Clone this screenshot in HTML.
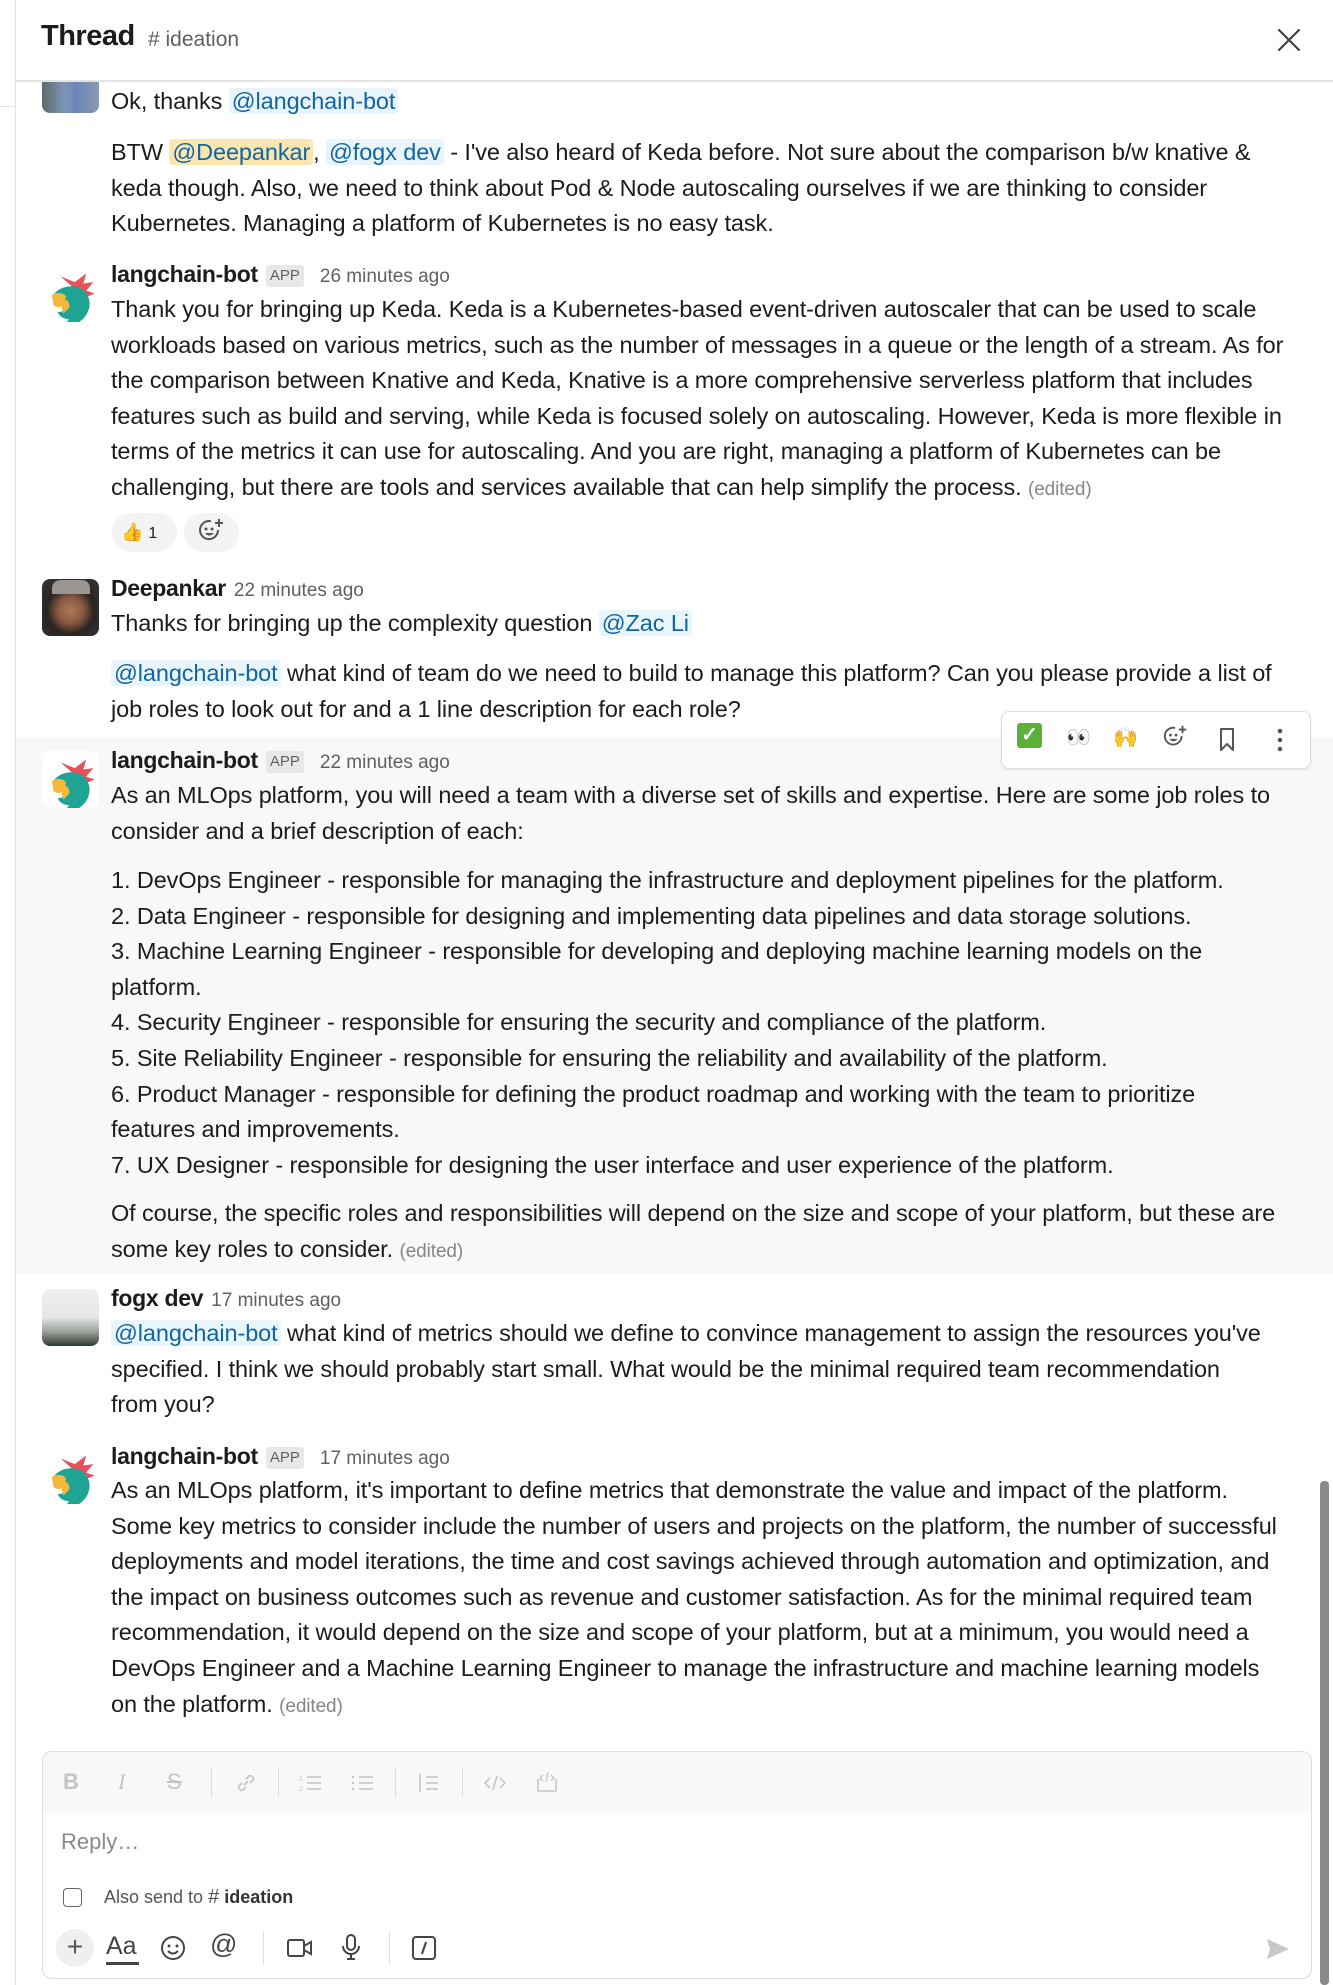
<!DOCTYPE html>
<html><head><meta charset="utf-8">
<style>
*{margin:0;padding:0;box-sizing:border-box}
body{width:1333px;height:1985px;background:#fff;font-family:"Liberation Sans",sans-serif;color:#1d1c1d;position:relative;overflow:hidden}
.abs{position:absolute}
.blk{position:absolute;left:111px;font-size:23.5px;line-height:35.6px;white-space:nowrap;letter-spacing:-0.1px}
.blk div{height:35.6px}
.m{background:#e8f5fa;color:#1264a3;border-radius:4px;padding:0 3px}
.my{background:#fbe6b0;color:#1264a3;border-radius:4px;padding:0 3px}
.ed{color:#868686;font-size:19px}
.hd{position:absolute;left:111px;font-size:23px;line-height:35.6px;white-space:nowrap}
.hd b{font-weight:bold;letter-spacing:-0.3px}
.app{display:inline-block;background:#e8e8e8;color:#616061;font-size:15px;line-height:22px;padding:0 4px;border-radius:3px;margin:0 8px 0 8px;vertical-align:2px}
.ts{color:#616061;font-size:19px;margin-left:8px}
.av{position:absolute;left:42px;width:57px;height:57px;border-radius:8px;overflow:hidden}
</style></head><body>
<div class="abs" style="left:15px;top:0;width:1px;height:1985px;background:#e2e2e2"></div>
<div class="abs" style="left:0;top:106px;width:15px;height:1px;background:#e2e2e2"></div>
<div class="abs" style="left:41px;top:20px;font-size:29px;font-weight:bold;letter-spacing:-0.5px">Thread</div>
<div class="abs" style="left:148px;top:28px;font-size:21px;color:#616061"># ideation</div>
<svg class="abs" style="left:1277px;top:28px" width="24" height="24" viewBox="0 0 24 24"><path d="M2 2L22 22M22 2L2 22" stroke="#444" stroke-width="2.2" stroke-linecap="round"/></svg>
<div class="abs" style="left:15px;top:80px;width:1318px;height:2px;background:#e4e4e4"></div>

<div class="abs" style="left:42px;top:82px;width:57px;height:31px;border-radius:0 0 8px 8px;background:linear-gradient(90deg,#5d6b6a 0%,#7d95b8 40%,#6a86b8 60%,#8a9ab0 100%)"></div>
<div class="blk" style="top:84px"><div>Ok, thanks <span class="m">@langchain-bot</span></div></div>
<div class="blk" style="top:135px">
<div>BTW <span class="my">@Deepankar</span>, <span class="m">@fogx dev</span> - I've also heard of Keda before. Not sure about the comparison b/w knative &amp;</div>
<div>keda though. Also, we need to think about Pod &amp; Node autoscaling ourselves if we are thinking to consider</div>
<div>Kubernetes. Managing a platform of Kubernetes is no easy task.</div>
</div>

<svg class="av" style="top:265px" viewBox="9 6 40 40"><rect x="0" y="0" width="57" height="57" fill="#fff"/><path d="M22 14l10 4 8-6-2 7 7-1-5 6 6 2-7 3z" fill="#e8505b"/><path d="M17 27c4-6 14-8 20-4 6 4 7 12 3 18-3 5-9 8-15 7l3-4c-4 0-7-2-8-5 4 0 6-2 6-4-4 0-8-3-9-8z" fill="#1fa392"/><path d="M16 27c3-2 8-2 10 1l-2 6c-2 2-5 2-7 0z" fill="#f2b83a"/><path d="M24 30c3 0 5 3 4 6l-4 4c-1-3-2-6 0-10z" fill="#f2b83a"/></svg>
<div class="hd" style="top:257px"><b>langchain-bot</b><span class="app">APP</span><span class="ts">26 minutes ago</span></div>
<div class="blk" style="top:292px">
<div>Thank you for bringing up Keda. Keda is a Kubernetes-based event-driven autoscaler that can be used to scale</div>
<div>workloads based on various metrics, such as the number of messages in a queue or the length of a stream. As for</div>
<div>the comparison between Knative and Keda, Knative is a more comprehensive serverless platform that includes</div>
<div>features such as build and serving, while Keda is focused solely on autoscaling. However, Keda is more flexible in</div>
<div>terms of the metrics it can use for autoscaling. And you are right, managing a platform of Kubernetes can be</div>
<div>challenging, but there are tools and services available that can help simplify the process. <span class="ed">(edited)</span></div>
</div>
<div class="abs" style="left:112px;top:513px;width:65px;height:39px;border-radius:20px;background:#f3f3f3;font-size:18px;line-height:39px;padding-left:9px">👍 <span style="font-size:16px">1</span></div>
<div class="abs" style="left:184px;top:513px;width:55px;height:39px;border-radius:20px;background:#f3f3f3"></div>
<svg class="abs" style="left:197px;top:516px" width="30" height="30" viewBox="0 0 30 30"><path d="M21 14a9 9 0 1 1-7-8.7" fill="none" stroke="#555" stroke-width="2"/><circle cx="9" cy="13" r="1.5" fill="#555"/><circle cx="15" cy="13" r="1.5" fill="#555"/><path d="M8 17q4 5 9 0z" fill="#555"/><path d="M22 3v8M18 7h8" stroke="#555" stroke-width="2"/></svg>

<div class="av" style="top:579px;background:radial-gradient(circle at 50% 55%,#b07a5a 0,#8a5a40 30%,#2a2522 55%,#3a3532 100%)"></div>
<div class="abs" style="left:52px;top:580px;width:38px;height:14px;border-radius:8px 8px 0 0;background:#9a9590"></div>
<div class="hd" style="top:571px"><b>Deepankar</b><span class="ts">22 minutes ago</span></div>
<div class="blk" style="top:606px"><div>Thanks for bringing up the complexity question <span class="m">@Zac Li</span></div></div>
<div class="blk" style="top:656px">
<div><span class="m">@langchain-bot</span> what kind of team do we need to build to manage this platform? Can you please provide a list of</div>
<div>job roles to look out for and a 1 line description for each role?</div>
</div>

<div class="abs" style="left:16px;top:737px;width:1317px;height:537px;background:#f8f8f8"></div>
<svg class="av" style="top:751px" viewBox="9 6 40 40"><rect x="0" y="0" width="57" height="57" fill="#fff"/><path d="M22 14l10 4 8-6-2 7 7-1-5 6 6 2-7 3z" fill="#e8505b"/><path d="M17 27c4-6 14-8 20-4 6 4 7 12 3 18-3 5-9 8-15 7l3-4c-4 0-7-2-8-5 4 0 6-2 6-4-4 0-8-3-9-8z" fill="#1fa392"/><path d="M16 27c3-2 8-2 10 1l-2 6c-2 2-5 2-7 0z" fill="#f2b83a"/><path d="M24 30c3 0 5 3 4 6l-4 4c-1-3-2-6 0-10z" fill="#f2b83a"/></svg>
<div class="hd" style="top:743px"><b>langchain-bot</b><span class="app">APP</span><span class="ts">22 minutes ago</span></div>
<div class="blk" style="top:778px">
<div>As an MLOps platform, you will need a team with a diverse set of skills and expertise. Here are some job roles to</div>
<div>consider and a brief description of each:</div>
</div>
<div class="blk" style="top:863px">
<div>1. DevOps Engineer - responsible for managing the infrastructure and deployment pipelines for the platform.</div>
<div>2. Data Engineer - responsible for designing and implementing data pipelines and data storage solutions.</div>
<div>3. Machine Learning Engineer - responsible for developing and deploying machine learning models on the</div>
<div>platform.</div>
<div>4. Security Engineer - responsible for ensuring the security and compliance of the platform.</div>
<div>5. Site Reliability Engineer - responsible for ensuring the reliability and availability of the platform.</div>
<div>6. Product Manager - responsible for defining the product roadmap and working with the team to prioritize</div>
<div>features and improvements.</div>
<div>7. UX Designer - responsible for designing the user interface and user experience of the platform.</div>
</div>
<div class="blk" style="top:1196px">
<div>Of course, the specific roles and responsibilities will depend on the size and scope of your platform, but these are</div>
<div>some key roles to consider. <span class="ed">(edited)</span></div>
</div>

<div class="abs" style="left:1001px;top:711px;width:310px;height:58px;background:#fff;border:1px solid #ddd;border-radius:8px;box-shadow:0 1px 3px rgba(0,0,0,.08)"></div>
<div class="abs" style="left:1017px;top:723px;width:25px;height:25px;background:#5bb03a;border-radius:3px;color:#fff;font-size:20px;line-height:25px;text-align:center;font-weight:bold">✓</div>
<div class="abs" style="left:1066px;top:725px;font-size:20px">👀</div>
<div class="abs" style="left:1113px;top:725px;font-size:20px">🙌</div>
<svg class="abs" style="left:1162px;top:723px" width="28" height="28" viewBox="0 0 30 30"><path d="M21 14a9 9 0 1 1-7-8.7" fill="none" stroke="#555" stroke-width="2"/><circle cx="9" cy="13" r="1.5" fill="#555"/><circle cx="15" cy="13" r="1.5" fill="#555"/><path d="M8 17q4 5 9 0z" fill="#555"/><path d="M22 3v8M18 7h8" stroke="#555" stroke-width="2"/></svg>
<svg class="abs" style="left:1218px;top:727px" width="18" height="26" viewBox="0 0 18 26"><path d="M3 2h12v21l-6-6-6 6z" fill="none" stroke="#555" stroke-width="2" stroke-linejoin="round"/></svg>
<svg class="abs" style="left:1277px;top:727px" width="6" height="26"><circle cx="3" cy="4" r="2.3" fill="#555"/><circle cx="3" cy="13" r="2.3" fill="#555"/><circle cx="3" cy="22" r="2.3" fill="#555"/></svg>

<div class="av" style="top:1289px;background:linear-gradient(180deg,#f0f0f0 0%,#e6e6e6 50%,#9aa09a 75%,#2f3a32 100%)"></div>
<div class="hd" style="top:1281px"><b>fogx dev</b><span class="ts">17 minutes ago</span></div>
<div class="blk" style="top:1316px">
<div><span class="m">@langchain-bot</span> what kind of metrics should we define to convince management to assign the resources you've</div>
<div>specified. I think we should probably start small. What would be the minimal required team recommendation</div>
<div>from you?</div>
</div>

<svg class="av" style="top:1447px" viewBox="9 6 40 40"><rect x="0" y="0" width="57" height="57" fill="#fff"/><path d="M22 14l10 4 8-6-2 7 7-1-5 6 6 2-7 3z" fill="#e8505b"/><path d="M17 27c4-6 14-8 20-4 6 4 7 12 3 18-3 5-9 8-15 7l3-4c-4 0-7-2-8-5 4 0 6-2 6-4-4 0-8-3-9-8z" fill="#1fa392"/><path d="M16 27c3-2 8-2 10 1l-2 6c-2 2-5 2-7 0z" fill="#f2b83a"/><path d="M24 30c3 0 5 3 4 6l-4 4c-1-3-2-6 0-10z" fill="#f2b83a"/></svg>
<div class="hd" style="top:1439px"><b>langchain-bot</b><span class="app">APP</span><span class="ts">17 minutes ago</span></div>
<div class="blk" style="top:1473px">
<div>As an MLOps platform, it's important to define metrics that demonstrate the value and impact of the platform.</div>
<div>Some key metrics to consider include the number of users and projects on the platform, the number of successful</div>
<div>deployments and model iterations, the time and cost savings achieved through automation and optimization, and</div>
<div>the impact on business outcomes such as revenue and customer satisfaction. As for the minimal required team</div>
<div>recommendation, it would depend on the size and scope of your platform, but at a minimum, you would need a</div>
<div>DevOps Engineer and a Machine Learning Engineer to manage the infrastructure and machine learning models</div>
<div>on the platform. <span class="ed">(edited)</span></div>
</div>

<div class="abs" style="left:1320px;top:1481px;width:9px;height:504px;background:#8a8a8a;border-radius:4px"></div>

<div class="abs" style="left:42px;top:1751px;width:1270px;height:228px;border:1px solid #dcdcdc;border-radius:10px;overflow:hidden">
 <div style="height:60px;background:#f8f8f8"></div>
</div>
<div class="abs" style="left:63px;top:1769px;font-size:22px;font-weight:bold;color:#c4c4c4">B</div>
<div class="abs" style="left:118px;top:1769px;font-size:22px;font-style:italic;font-family:'Liberation Serif',serif;color:#c4c4c4">I</div>
<div class="abs" style="left:167px;top:1769px;font-size:22px;color:#c4c4c4;text-decoration:line-through">S</div>
<div class="abs" style="left:211px;top:1767px;width:1px;height:30px;background:#ddd"></div>
<svg class="abs" style="left:233px;top:1770px" width="26" height="26"><path d="M11 15l4-4M9 13l-3 3a3 3 0 0 0 4 4l3-3M17 13l3-3a3 3 0 0 0-4-4l-3 3" fill="none" stroke="#c4c4c4" stroke-width="1.6"/></svg>
<div class="abs" style="left:278px;top:1767px;width:1px;height:30px;background:#ddd"></div>
<svg class="abs" style="left:298px;top:1772px" width="24" height="22"><path d="M9 5h14M9 11h14M9 17h14" stroke="#c4c4c4" stroke-width="1.5"/><text x="1" y="9" font-size="7" fill="#c4c4c4" font-family="Liberation Sans">1</text><text x="1" y="19" font-size="7" fill="#c4c4c4" font-family="Liberation Sans">2</text></svg>
<svg class="abs" style="left:350px;top:1772px" width="24" height="22"><path d="M9 5h14M9 11h14M9 17h14" stroke="#c4c4c4" stroke-width="1.5"/><circle cx="3" cy="5" r="1.2" fill="#c4c4c4"/><circle cx="3" cy="11" r="1.2" fill="#c4c4c4"/><circle cx="3" cy="17" r="1.2" fill="#c4c4c4"/></svg>
<div class="abs" style="left:395px;top:1767px;width:1px;height:30px;background:#ddd"></div>
<svg class="abs" style="left:417px;top:1772px" width="24" height="22"><path d="M3 2v18M9 5h12M9 11h12M9 17h12" stroke="#c4c4c4" stroke-width="1.5"/></svg>
<div class="abs" style="left:462px;top:1767px;width:1px;height:30px;background:#ddd"></div>
<svg class="abs" style="left:482px;top:1772px" width="26" height="22"><path d="M8 6l-5 5 5 5M18 6l5 5-5 5M15 4l-4 14" stroke="#c4c4c4" stroke-width="1.5" fill="none"/></svg>
<svg class="abs" style="left:534px;top:1770px" width="26" height="24"><path d="M4 9v12h18V9" stroke="#c4c4c4" stroke-width="1.5" fill="none"/><path d="M9 5l-3 3 3 3M17 5l3 3-3 3M14 2l-2 10" stroke="#c4c4c4" stroke-width="1.3" fill="none"/></svg>
<div class="abs" style="left:61px;top:1829px;font-size:22px;color:#8a8a8a">Reply…</div>
<div class="abs" style="left:63px;top:1888px;width:19px;height:19px;border:1.5px solid #666;border-radius:4px"></div>
<div class="abs" style="left:104px;top:1886px;font-size:18px;color:#555">Also send to <span style="font-size:20px">#</span> <b style="color:#333">ideation</b></div>
<div class="abs" style="left:56px;top:1929px;width:38px;height:38px;border-radius:19px;background:#efefef;font-size:28px;line-height:36px;text-align:center;color:#555">+</div>
<div class="abs" style="left:106px;top:1931px;font-size:25px;color:#444;line-height:30px">Aa</div>
<div class="abs" style="left:106px;top:1962px;width:33px;height:2.5px;background:#444"></div>
<svg class="abs" style="left:160px;top:1935px" width="26" height="26"><circle cx="13" cy="13" r="11" fill="none" stroke="#444" stroke-width="2"/><circle cx="9" cy="11" r="1.5" fill="#444"/><circle cx="17" cy="11" r="1.5" fill="#444"/><path d="M8 16q5 5 10 0" fill="none" stroke="#444" stroke-width="2"/></svg>
<div class="abs" style="left:210px;top:1929px;font-size:27px;color:#444">@</div>
<div class="abs" style="left:263px;top:1932px;width:1px;height:32px;background:#ddd"></div>
<svg class="abs" style="left:286px;top:1937px" width="28" height="22"><rect x="2" y="3" width="16" height="16" rx="2" fill="none" stroke="#444" stroke-width="2"/><path d="M18 9l7-4v12l-7-4" fill="none" stroke="#444" stroke-width="2"/></svg>
<svg class="abs" style="left:340px;top:1933px" width="22" height="30"><rect x="7" y="2" width="8" height="15" rx="4" fill="none" stroke="#444" stroke-width="2"/><path d="M3 13a8 8 0 0 0 16 0M11 21v5M7 26h8" fill="none" stroke="#444" stroke-width="2"/></svg>
<div class="abs" style="left:389px;top:1932px;width:1px;height:32px;background:#ddd"></div>
<svg class="abs" style="left:411px;top:1935px" width="26" height="26"><rect x="2" y="2" width="22" height="22" rx="3" fill="none" stroke="#444" stroke-width="2"/><path d="M15 7l-4 12" stroke="#444" stroke-width="2"/></svg>
<svg class="abs" style="left:1266px;top:1938px" width="24" height="22"><path d="M1 1l22 10-22 10 3-10z" fill="#c8c8c8"/></svg>
</body></html>
